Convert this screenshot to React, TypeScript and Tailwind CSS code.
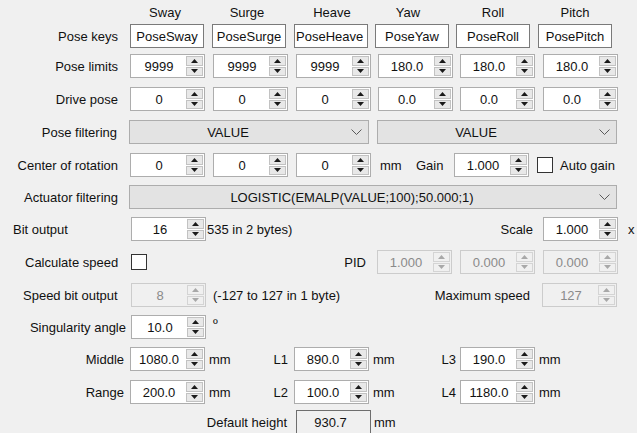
import React from 'react'

const cols = ['ml-[12px]', 'ml-[8px]', 'ml-[8px]', 'ml-[7px]', 'ml-[7px]', 'ml-[8px]']

function Arrows({ dis }: { dis?: boolean }) {
  const c = dis ? '#a8a8a8' : '#1a1a1a'
  return (
    <div className="flex h-full w-[17px] flex-col gap-[1px]">
      <div className={`flex flex-1 items-center justify-center border ${dis ? 'border-[#d4d4d4] bg-[#f0f0f0]' : 'border-[#c2c2c2] bg-[#e8e8e8]'}`}>
        <svg width="7" height="4" viewBox="0 0 7 4"><path d="M3.5 0 L7 4 L0 4 Z" fill={c} /></svg>
      </div>
      <div className={`flex flex-1 items-center justify-center border ${dis ? 'border-[#d4d4d4] bg-[#f0f0f0]' : 'border-[#c2c2c2] bg-[#e8e8e8]'}`}>
        <svg width="7" height="4" viewBox="0 0 7 4"><path d="M0 0 L7 0 L3.5 4 Z" fill={c} /></svg>
      </div>
    </div>
  )
}

function Spin({ v, cls = '', dis }: { v: string; cls?: string; dis?: boolean }) {
  return (
    <div className={`flex h-[24px] w-[75px] shrink-0 border p-[1px] ${dis ? 'border-[#cccccc] bg-[#f0f0f0] text-[#8a8a8a]' : 'border-[#adadad] bg-white'} ${cls}`}>
      <div className="flex flex-1 items-center justify-center">{v}</div>
      <Arrows dis={dis} />
    </div>
  )
}

function Box({ v, cls = '', left }: { v: string; cls?: string; left?: boolean }) {
  return (
    <div className={`flex h-[24px] w-[74px] shrink-0 items-center overflow-hidden whitespace-nowrap border border-[#7a7a7a] bg-white ${left ? 'pl-[1px]' : 'justify-center'} ${cls}`}>
      {v}
    </div>
  )
}

function Combo({ v, cls }: { v: string; cls: string }) {
  return (
    <div className={`flex h-[24px] shrink-0 items-center border border-[#adadad] bg-[#e3e3e3] ${cls}`}>
      <div className="flex-1 pr-[25px] text-center">{v}</div>
      <svg className="mr-[6px]" width="11" height="6" viewBox="0 0 11 6">
        <path d="M0.5 0.5 L5.5 5.5 L10.5 0.5" fill="none" stroke="#5a5a5a" strokeWidth="1" />
      </svg>
    </div>
  )
}

function Check({ cls = '' }: { cls?: string }) {
  return <div className={`h-[16px] w-[16px] shrink-0 border border-[#333333] bg-white ${cls}`} />
}

function PoseRow({ label, top, children }: { label: string; top: string; children: React.ReactNode[] }) {
  return (
    <div className={`flex h-[24px] items-center ${top}`}>
      <div className="w-[118px] shrink-0 text-right">{label}</div>
      {children.map((c, i) => (
        <div key={i} className={`flex shrink-0 ${cols[i]}`}>{c}</div>
      ))}
    </div>
  )
}

export default function App() {
  const heads = [
    ['Sway', 'pr-[5px]'],
    ['Surge', 'pr-[7px]'],
    ['Heave', 'pr-[3px]'],
    ['Yaw', 'pr-[15px]'],
    ['Roll', 'pr-[9px]'],
    ['Pitch', 'pr-[11px]'],
  ]

  return (
    <div className="h-[433px] w-[637px] overflow-hidden bg-[#f0f0f0] text-[13px] leading-none text-[#111111]" style={{ fontFamily: '"Liberation Sans", Arial, sans-serif' }}>
      {/* column headers */}
      <div className="flex h-[24px] items-center">
        <div className="w-[118px] shrink-0" />
        {heads.map(([h, p], i) => (
          <div key={h} className={`w-[75px] shrink-0 text-center ${cols[i]} ${p}`}>{h}</div>
        ))}
      </div>

      <PoseRow label="Pose keys" top="mt-0">
        {[
          <Box v="PoseSway" />,
          <Box v="PoseSurge" />,
          <Box v="PoseHeave" left />,
          <Box v="PoseYaw" />,
          <Box v="PoseRoll" />,
          <Box v="PosePitch" />,
        ]}
      </PoseRow>

      <PoseRow label="Pose limits" top="mt-[6px]">
        {['9999', '9999', '9999', '180.0', '180.0', '180.0'].map((v, i) => <Spin key={i} v={v} />)}
      </PoseRow>

      <PoseRow label="Drive pose" top="mt-[9px]">
        {['0', '0', '0', '0.0', '0.0', '0.0'].map((v, i) => <Spin key={i} v={v} />)}
      </PoseRow>

      <div className="mt-[9px] flex h-[24px] items-center">
        <div className="w-[117px] shrink-0 text-right">Pose filtering</div>
        <Combo v="VALUE" cls="ml-[12px] w-[240px]" />
        <Combo v="VALUE" cls="ml-[8px] w-[240px]" />
      </div>

      <div className="mt-[9px] flex h-[24px] items-center">
        <div className="w-[118px] shrink-0 text-right">Center of rotation</div>
        <Spin v="0" cls="ml-[12px]" />
        <Spin v="0" cls="ml-[8px]" />
        <Spin v="0" cls="ml-[8px]" />
        <div className="ml-[9px] w-[36px] shrink-0">mm</div>
        <div className="w-[38px] shrink-0">Gain</div>
        <Spin v="1.000" />
        <Check cls="ml-[8px]" />
        <div className="ml-[7px] shrink-0">Auto gain</div>
      </div>

      <div className="mt-[8px] flex h-[24px] items-center">
        <div className="w-[118px] shrink-0 text-right">Actuator filtering</div>
        <Combo v="LOGISTIC(EMALP(VALUE;100);50.000;1)" cls="ml-[11px] w-[488px]" />
      </div>

      <div className="mt-[8px] flex h-[24px] items-center">
        <div className="w-[131px] shrink-0 pl-[13px]">Bit output</div>
        <Spin v="16" />
        <div className="w-[199px] shrink-0 pl-[1px]">535 in 2 bytes)</div>
        <div className="w-[128px] shrink-0 text-right">Scale</div>
        <Spin v="1.000" cls="ml-[10px]" />
        <div className="ml-[10px] shrink-0">x</div>
      </div>

      <div className="mt-[9px] flex h-[24px] items-center">
        <div className="w-[131px] shrink-0 pl-[25px]">Calculate speed</div>
        <Check />
        <div className="w-[219px] shrink-0 text-right">PID</div>
        <Spin v="1.000" dis cls="ml-[11px]" />
        <Spin v="0.000" dis cls="ml-[8px]" />
        <Spin v="0.000" dis cls="ml-[8px]" />
      </div>

      <div className="mt-[9px] flex h-[24px] items-center">
        <div className="w-[131px] shrink-0 pl-[23px]">Speed bit output</div>
        <Spin v="8" dis />
        <div className="ml-[7px] w-[200px] shrink-0">(-127 to 127 in 1 byte)</div>
        <div className="w-[117px] shrink-0 text-right">Maximum speed</div>
        <Spin v="127" dis cls="ml-[12px]" />
      </div>

      <div className="mt-[8px] flex h-[24px] items-center">
        <div className="w-[126px] shrink-0 text-right">Singularity angle</div>
        <Spin v="10.0" cls="ml-[5px]" />
        <div className="ml-[7px] shrink-0 self-start pt-[2px]">º</div>
      </div>

      <div className="mt-[8px] flex h-[24px] items-center">
        <div className="w-[124px] shrink-0 text-right">Middle</div>
        <Spin v="1080.0" cls="ml-[6px]" />
        <div className="ml-[4px] w-[60px] shrink-0">mm</div>
        <div className="w-[19px] shrink-0 text-right">L1</div>
        <Spin v="890.0" cls="ml-[6px]" />
        <div className="ml-[4px] w-[56px] shrink-0">mm</div>
        <div className="w-[27px] shrink-0 text-right">L3</div>
        <Spin v="190.0" cls="ml-[4px]" />
        <div className="ml-[4px] shrink-0">mm</div>
      </div>

      <div className="mt-[9px] flex h-[24px] items-center">
        <div className="w-[124px] shrink-0 text-right">Range</div>
        <Spin v="200.0" cls="ml-[6px]" />
        <div className="ml-[4px] w-[60px] shrink-0">mm</div>
        <div className="w-[19px] shrink-0 text-right">L2</div>
        <Spin v="100.0" cls="ml-[6px]" />
        <div className="ml-[4px] w-[56px] shrink-0">mm</div>
        <div className="w-[27px] shrink-0 text-right">L4</div>
        <Spin v="1180.0" cls="ml-[4px]" />
        <div className="ml-[4px] shrink-0">mm</div>
      </div>

      <div className="mt-[6px] flex h-[24px] items-center">
        <div className="w-[287px] shrink-0 text-right">Default height</div>
        <div className="ml-[9px] flex h-[24px] w-[75px] shrink-0 items-center justify-center border border-[#6e6e6e] pr-[6px]">930.7</div>
        <div className="ml-[3px] shrink-0">mm</div>
      </div>
    </div>
  )
}
